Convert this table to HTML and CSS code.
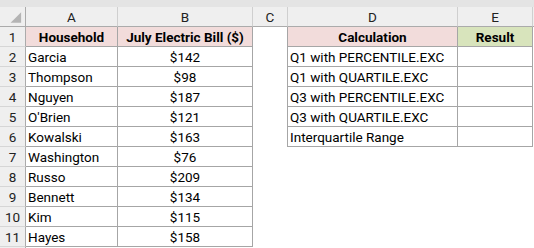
FILE: index.html
```html
<!DOCTYPE html>
<html>
<head>
<meta charset="utf-8">
<link rel="stylesheet" href="styles.css">
</head>
<body>
<div class="sheet">
  <div class="topband"></div>
  <div class="grid">
    <div class="corner"><svg class="tri" width="26" height="19" viewBox="0 0 26 19"><polygon points="22,5 22,16 11,16" fill="#b4b4b4"/></svg></div>
    <div class="colhead">A</div>
    <div class="colhead">B</div>
    <div class="colhead">C</div>
    <div class="colhead">D</div>
    <div class="colhead">E</div>
    <div class="colhead last"></div>

    <div class="rowhead">1</div>
    <div class="cell b pink bold center">Household</div>
    <div class="cell b pink bold center">July Electric Bill ($)</div>
    <div class="cell edge"></div>
    <div class="cell b pink bold center">Calculation</div>
    <div class="cell b green bold center">Result</div>
    <div class="cell"></div>

    <div class="rowhead">2</div>
    <div class="cell b">Garcia</div>
    <div class="cell b center">$142</div>
    <div class="cell edge"></div>
    <div class="cell b">Q1 with PERCENTILE.EXC</div>
    <div class="cell b"></div>
    <div class="cell"></div>

    <div class="rowhead">3</div>
    <div class="cell b">Thompson</div>
    <div class="cell b center">$98</div>
    <div class="cell edge"></div>
    <div class="cell b">Q1 with QUARTILE.EXC</div>
    <div class="cell b"></div>
    <div class="cell"></div>

    <div class="rowhead">4</div>
    <div class="cell b">Nguyen</div>
    <div class="cell b center">$187</div>
    <div class="cell edge"></div>
    <div class="cell b">Q3 with PERCENTILE.EXC</div>
    <div class="cell b"></div>
    <div class="cell"></div>

    <div class="rowhead">5</div>
    <div class="cell b">O'Brien</div>
    <div class="cell b center">$121</div>
    <div class="cell edge"></div>
    <div class="cell b">Q3 with QUARTILE.EXC</div>
    <div class="cell b"></div>
    <div class="cell"></div>

    <div class="rowhead">6</div>
    <div class="cell b">Kowalski</div>
    <div class="cell b center">$163</div>
    <div class="cell edge"></div>
    <div class="cell b">Interquartile Range</div>
    <div class="cell b"></div>
    <div class="cell"></div>

    <div class="rowhead">7</div>
    <div class="cell b">Washington</div>
    <div class="cell b center">$76</div>
    <div class="cell"></div>
    <div class="cell"></div>
    <div class="cell"></div>
    <div class="cell"></div>

    <div class="rowhead">8</div>
    <div class="cell b">Russo</div>
    <div class="cell b center">$209</div>
    <div class="cell"></div>
    <div class="cell"></div>
    <div class="cell"></div>
    <div class="cell"></div>

    <div class="rowhead">9</div>
    <div class="cell b">Bennett</div>
    <div class="cell b center">$134</div>
    <div class="cell"></div>
    <div class="cell"></div>
    <div class="cell"></div>
    <div class="cell"></div>

    <div class="rowhead">10</div>
    <div class="cell b">Kim</div>
    <div class="cell b center">$115</div>
    <div class="cell"></div>
    <div class="cell"></div>
    <div class="cell"></div>
    <div class="cell"></div>

    <div class="rowhead">11</div>
    <div class="cell b">Hayes</div>
    <div class="cell b center">$158</div>
    <div class="cell"></div>
    <div class="cell"></div>
    <div class="cell"></div>
    <div class="cell"></div>

    <div class="rowhead"></div>
    <div class="cell"></div>
    <div class="cell"></div>
    <div class="cell"></div>
    <div class="cell"></div>
    <div class="cell"></div>
    <div class="cell"></div>
  </div>
</div>
</body>
</html>
```
FILE: styles.css
```css
html, body {
  margin: 0;
  padding: 0;
  background: #ffffff;
}
.sheet {
  width: 534px;
  height: 248px;
  overflow: hidden;
  font-family: Roboto, "Liberation Sans", sans-serif;
  font-size: 13.5px;
  color: #000000;
}
.topband {
  height: 7px;
  background: #e4e4e4;
}
.grid {
  display: grid;
  grid-template-columns: 26px 92px 135px 35px 170px 75px 1fr;
  grid-auto-rows: 20px;
}
.grid > div {
  box-sizing: border-box;
  display: flex;
  align-items: center;
  white-space: nowrap;
  overflow: hidden;
  line-height: 19px;
  padding-top: 1px;
}
.corner {
  background: #efefef;
  border-right: 1px solid #ababab;
  border-bottom: 1px solid #ababab;
}
.grid > .corner {
  padding-top: 0;
}
.tri {
  display: block;
}
.colhead {
  background: #efefef;
  border-right: 1px solid #cfcfcf;
  border-bottom: 1px solid #ababab;
  justify-content: center;
  color: #222222;
}
.colhead.last {
  border-right: none;
}
.rowhead {
  background: #efefef;
  border-right: 1px solid #ababab;
  border-bottom: 1px solid #d6d6d6;
  justify-content: center;
  color: #222222;
}
.cell {
  padding-left: 2px;
  padding-right: 2px;
}
.b {
  border-right: 1px solid #a6a6a6;
  border-bottom: 1px solid #a6a6a6;
}
.edge {
  border-right: 1px solid #a6a6a6;
}
.center {
  justify-content: center;
}
.bold {
  font-weight: 700;
}
.pink {
  background: #f2dcdb;
}
.green {
  background: #d8e4bc;
}
```
